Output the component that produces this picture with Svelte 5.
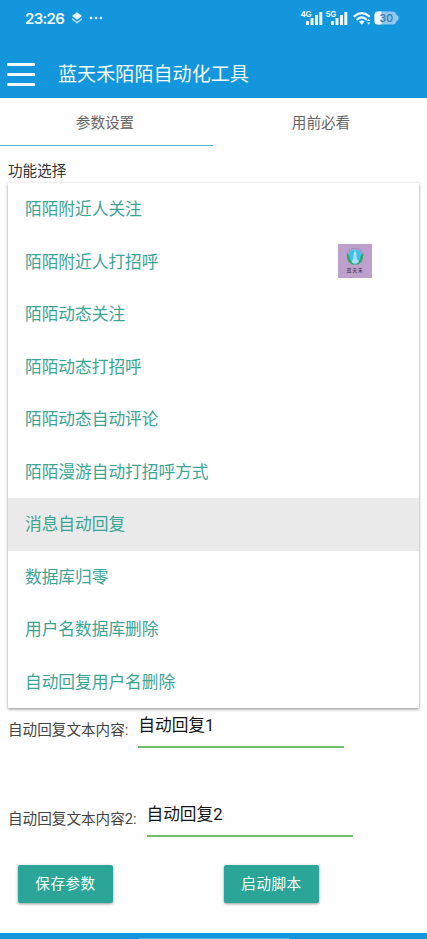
<script lang="ts">
  interface Field {
    label: string;
    value: string;
  }

  const tabs: string[] = ['参数设置', '用前必看'];
  const options: string[] = [
    '陌陌附近人关注',
    '陌陌附近人打招呼',
    '陌陌动态关注',
    '陌陌动态打招呼',
    '陌陌动态自动评论',
    '陌陌漫游自动打招呼方式',
    '消息自动回复',
    '数据库归零',
    '用户名数据库删除',
    '自动回复用户名删除',
  ];
  const networks: string[] = ['4G', '5G'];

  let activeTab = $state(0);
  let selected = $state(6);
  let fields: Field[] = $state([
    { label: '自动回复文本内容:', value: '自动回复1' },
    { label: '自动回复文本内容2:', value: '自动回复2' },
  ]);
</script>

<div class="app">
  <header>
    <div class="status">
      <span class="clock">23:26</span>
      <svg class="layers" width="12" height="12" viewBox="0 0 12 12" aria-hidden="true">
        <path d="M6 0.3 11 4 6 7.8 1 4Z" fill="#eef8ff" />
        <path d="M1 6.1 6 9.7 11 6.1V7.6L6 11.4 1 7.6Z" fill="#c9e7fa" />
      </svg>
      <svg width="14" height="4" viewBox="0 0 14 4" fill="#eef8ff" aria-hidden="true">
        <circle cx="2" cy="2" r="1.3" />
        <circle cx="7" cy="2" r="1.3" />
        <circle cx="12" cy="2" r="1.3" />
      </svg>
      <div class="system">
        {#each networks as network}
          <svg width="25" height="16" viewBox="0 0 25 16" fill="#eef8ff" aria-hidden="true">
            <text x="0.5" y="6.8" class="network">{network}</text>
            <rect x="6" y="11" width="3" height="4" rx="0.6" />
            <rect x="10.5" y="8" width="3" height="7" rx="0.6" />
            <rect x="15" y="5" width="3" height="10" rx="0.6" />
            <rect x="19.3" y="2" width="3" height="13" rx="0.6" />
          </svg>
        {/each}
        <svg class="wifi" width="19" height="15" viewBox="0 0 19 15" aria-hidden="true">
          <g fill="none" stroke="#eef8ff" stroke-width="2.2" stroke-linecap="round">
            <path d="M1.5 5.2Q8.7-1 16 5.2" />
            <path d="M4.3 8.3Q8.7 4.6 13.2 8.3" />
          </g>
          <path d="M5.8 10.5Q8.7 8.5 11.6 10.5L8.7 13.8Z" fill="#eef8ff" />
          <path d="M14 10 15.7 8l1.7 2ZM14 11.6h3.4l-1.7 2Z" fill="#eef8ff" />
        </svg>
        <svg class="battery" width="25" height="14" viewBox="0 0 25 14" aria-hidden="true">
          <path d="M4 0.5H19Q21.5 0.5 22.2 3.2L24.5 5.5V8.5L22.2 10.8Q21.5 13.5 19 13.5H4Q0.5 13.5 0.5 10V4Q0.5 0.5 4 0.5Z" fill="#90c9f0" />
          <path d="M7.5 0.5H4Q0.5 0.5 0.5 4V10Q0.5 13.5 4 13.5H7.5Z" fill="#f1f9ff" />
          <text x="5.6" y="10.8" class="level">30</text>
        </svg>
      </div>
    </div>
    <div class="toolbar">
      <button class="menu" aria-label="菜单">
        <span></span>
        <span></span>
        <span></span>
      </button>
      <h1>蓝天禾陌陌自动化工具</h1>
    </div>
  </header>

  <nav>
    {#each tabs as tab, i}
      <button class="tab" class:active={activeTab === i} onclick={() => (activeTab = i)}>{tab}</button>
    {/each}
  </nav>

  <main>
    <p class="caption">功能选择</p>
    <div class="dropdown">
      {#each options as option, i}
        <button class="option" class:selected={selected === i} onclick={() => (selected = i)}>{option}</button>
      {/each}

      <!-- floating script launcher -->
      <svg class="floating" width="34" height="34" viewBox="0 0 34 34" aria-hidden="true">
        <rect width="34" height="34" fill="#bda0cb" />
        <path d="M9 8.5Q17 0 25 8.5" fill="none" stroke="#8c7cab" stroke-width="1" stroke-dasharray="1.5 1" />
        <circle cx="17" cy="12.8" r="7.4" fill="#45bfe8" />
        <path d="M8.8 9.5Q8 20 17 21Q12.5 18 11.8 14Q11 10 8.8 9.5Z" fill="#35a660" />
        <path d="M25.2 9.5Q26 20 17 21Q21.5 18 22.2 14Q23 10 25.2 9.5Z" fill="#35a660" />
        <path d="M17 6 18.5 10V14L21 18Q17 21 13.5 18L15.5 14V10Z" fill="#a5e2f7" />
        <text x="17" y="28.3" class="brand">蓝天禾</text>
      </svg>
    </div>

    {#each fields as field}
      <label class="field">
        <span>{field.label}</span>
        <input type="text" bind:value={field.value} />
      </label>
    {/each}

    <div class="actions">
      <button class="btn">保存参数</button>
      <button class="btn">启动脚本</button>
    </div>
  </main>

  <footer><span></span></footer>
</div>

<style>
  :global(body) {
    margin: 0;
    background: #fefefe;
  }

  .app {
    display: flex;
    flex-direction: column;
    height: 939px;
    overflow: hidden;
    background: #fefefe;
    font-family: Roboto, "Noto Sans CJK SC", sans-serif;
    color: #333;
  }

  button,
  input {
    margin: 0;
    padding: 0;
    border: none;
    border-radius: 0;
    outline: none;
    background: none;
    font-family: inherit;
  }

  header {
    flex: none;
    height: 98px;
    background: #1496dd;
    color: #f2faff;
  }

  .status {
    display: flex;
    align-items: center;
    height: 36px;
    padding: 0 28px 0 25px;
  }

  .clock {
    width: 39px;
    padding-top: 1px;
    font: 600 15px/18px Inter, sans-serif;
    letter-spacing: -0.7px;
    white-space: nowrap;
  }

  .layers {
    margin: 0 6px 0 7px;
  }

  .system {
    display: flex;
    align-items: center;
    margin-left: auto;
  }

  .network {
    font: 700 8px Inter, sans-serif;
    letter-spacing: -0.3px;
  }

  .wifi {
    margin: 1px 2px 0 3px;
  }

  .level {
    font: 600 10.5px Inter, sans-serif;
    fill: #3b83b5;
  }

  .toolbar {
    display: flex;
    align-items: center;
    box-sizing: border-box;
    height: 62px;
    padding: 14px 7px 0;
  }

  .menu {
    display: flex;
    flex-direction: column;
    gap: 7px;
    width: 28px;
    margin-right: 23px;
  }

  .menu span {
    height: 3px;
    border-radius: 1px;
    background: #f2faff;
  }

  h1 {
    margin: 2px 0 0;
    font-size: 19.1px;
    font-weight: 400;
    line-height: 28px;
  }

  nav {
    display: grid;
    grid-template-columns: 213px 1fr;
    flex: none;
    height: 48px;
  }

  .tab {
    box-sizing: border-box;
    border-bottom: 1px solid transparent;
    padding: 0 0 1px 2px;
    font-size: 14.6px;
    color: #666;
  }

  .tab:first-child {
    padding: 0 3px 1px 0;
  }

  .tab.active {
    border-color: #54b1cf;
  }

  main {
    flex: 1;
    padding: 0 8px;
  }

  .caption {
    height: 22px;
    margin: 0;
    padding-top: 15px;
    font-size: 14.6px;
    line-height: 21px;
  }

  .dropdown {
    position: relative;
    display: flex;
    flex-direction: column;
    background: #fff;
    box-shadow: 0 1px 3px rgba(0, 0, 0, 0.34), 0 2px 2px rgba(0, 0, 0, 0.1);
  }

  .option {
    height: 52.5px;
    padding: 0 17px 2px;
    text-align: left;
    font-size: 16.7px;
    color: #3ca494;
  }

  .option.selected {
    background: #eaeaea;
  }

  .floating {
    position: absolute;
    top: 61px;
    left: 330px;
  }

  .brand {
    font: 500 5px "Liberation Serif", "Noto Sans CJK SC", serif;
    letter-spacing: 0.7px;
    fill: #51405e;
    text-anchor: middle;
  }

  .field {
    display: flex;
    align-items: flex-start;
    height: 89px;
  }

  .field span {
    flex: none;
    padding-top: 12px;
    margin-right: 10px;
    font-size: 14.6px;
    line-height: 21px;
    color: #444;
  }

  .field input {
    box-sizing: border-box;
    width: 206px;
    height: 40px;
    padding: 0 0 7px;
    border-bottom: 2px solid #70bd6e;
    font-size: 16.7px;
    color: #151515;
  }

  .actions {
    display: flex;
    gap: 111px;
    margin: -21px 0 0 10px;
  }

  .btn {
    width: 95px;
    height: 38px;
    padding-bottom: 3px;
    border-radius: 2px;
    background: #2aa597;
    box-shadow: 0 1px 3px rgba(0, 0, 0, 0.4);
    color: #f5fffd;
    font-size: 14.6px;
    letter-spacing: 0.5px;
  }

  footer {
    display: flex;
    justify-content: center;
    align-items: flex-end;
    flex: none;
    height: 6px;
    background: #1496dd;
  }

  footer span {
    width: 150px;
    height: 1px;
    background: #54b2e8;
  }
</style>
